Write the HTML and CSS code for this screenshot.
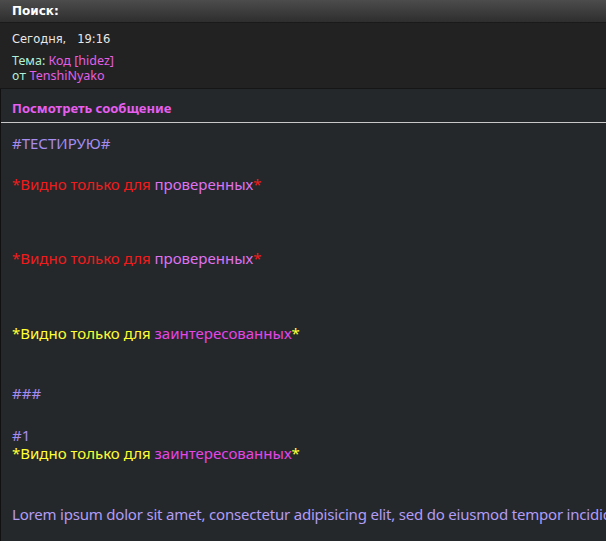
FILE: index.html
```html
<!DOCTYPE html>
<html lang="ru">
<head>
    <meta charset="UTF-8">
    <title>Поиск</title>
    <link rel="stylesheet" href="styles.css">
</head>
<body>
    <div class="head-bar">Поиск:</div>

    <div class="post-info">
        <div class="post-date">Сегодня, &nbsp;&nbsp;19:16</div>
        <div class="post-topic">Тема: <span class="pink">Код [hidez]</span></div>
        <div class="post-author"><span class="plain">от</span> <span class="pink">TenshiNyako</span></div>
    </div>

    <div class="post-body">
        <div class="view-link">Посмотреть сообщение</div>
        <div class="message">
            <div class="lav l1">#ТЕСТИРУЮ#</div>
            <div class="red l2">*Видно только для <span class="pink-light">проверенных</span>*</div>
            <div class="red l3">*Видно только для <span class="pink-light">проверенных</span>*</div>
            <div class="yellow l4">*Видно только для <span class="pink-hot">заинтересованных</span>*</div>
            <div class="lav l5">###</div>
            <div class="lav l6">#1</div>
            <div class="yellow">*Видно только для <span class="pink-hot">заинтересованных</span>*</div>
            <div class="lorem l7">Lorem ipsum dolor sit amet, consectetur adipisicing elit, sed do eiusmod tempor incididunt ut labore et dolore magna aliqua.</div>
        </div>
    </div>
</body>
</html>
```

FILE: styles.css
```css
body {
    margin: 0;
    background-color: #25282b;
    font-family: 'Comic Sans MS', 'Noto Sans', sans-serif;
    overflow: hidden;
}

.head-bar {
    height: 22px;
    line-height: 22px;
    padding-left: 12px;
    background: linear-gradient(#4c4c4c, #2e2e2e);
    border-bottom: 1px solid #1a1a1a;
    color: #ffffff;
    font-family: 'DejaVu Sans', sans-serif;
    font-weight: bold;
    font-size: 12px;
}

.post-info {
    height: 66px;
    padding: 0 12px;
    background-color: #222222;
    border-bottom: 1px solid #161616;
    box-sizing: border-box;
}

.post-date {
    padding-top: 5px;
    height: 22px;
    line-height: 22px;
    color: #e8e8e8;
    font-family: 'DejaVu Sans', sans-serif;
    font-size: 11.5px;
}

.post-topic,
.post-author {
    color: #b0f0d8;
    font-size: 12.5px;
    line-height: 15px;
}

.post-topic {
    margin-top: 3px;
}

.post-author .plain {
    font-family: 'DejaVu Sans', sans-serif;
    font-size: 12px;
}

.pink {
    color: #e25fe6;
}

.post-body {
    border-left: 1px solid #111;
    border-bottom: 2px solid #111;
    height: 452px;
}

.view-link {
    height: 33px;
    line-height: 38px;
    padding-left: 11px;
    border-bottom: 1px solid #c8c8c8;
    color: #e75ef0;
    font-weight: bold;
    font-size: 13px;
}

.message {
    padding: 11px 11px 0;
    font-size: 15px;
    line-height: 18px;
    white-space: nowrap;
}

.lav {
    color: #a48cf0;
}

.red {
    color: #f01c1c;
}

.yellow {
    color: #ffff33;
}

.pink-light {
    color: #df72f2;
}

.pink-hot {
    color: #e545e6;
}

.lorem {
    color: #b29cf6;
    letter-spacing: -0.2px;
}

.l2 { margin-top: 23px; }
.l3 { margin-top: 56px; }
.l4 { margin-top: 57px; }
.l5 { margin-top: 42px; }
.l6 { margin-top: 24px; }
.l7 { margin-top: 43px; }
```
